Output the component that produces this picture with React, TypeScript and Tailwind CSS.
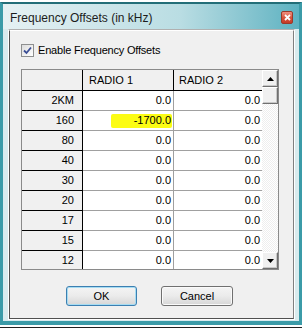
import React from "react";

const rows: { band: string; r1: string; r2: string; mark?: boolean }[] = [
  { band: "2KM", r1: "0.0", r2: "0.0" },
  { band: "160", r1: "-1700.0", r2: "0.0", mark: true },
  { band: "80", r1: "0.0", r2: "0.0" },
  { band: "40", r1: "0.0", r2: "0.0" },
  { band: "30", r1: "0.0", r2: "0.0" },
  { band: "20", r1: "0.0", r2: "0.0" },
  { band: "17", r1: "0.0", r2: "0.0" },
  { band: "15", r1: "0.0", r2: "0.0" },
  { band: "12", r1: "0.0", r2: "0.0" },
];

function ScrollButton({ dir }: { dir?: "up" | "down" }) {
  return (
    <div className="h-[17px] w-[16px] shrink-0 flex items-center justify-center bg-[#f0f0f0] border border-t-white border-l-white border-b-[#707070] border-r-[#707070] shadow-[inset_-1px_-1px_0_#c8c8c8]">
      {dir && (
        <svg width="7" height="4" viewBox="0 0 7 4">
          {dir === "up" ? (
            <polygon points="0,4 7,4 3.5,0" fill="#000" />
          ) : (
            <polygon points="0,0 7,0 3.5,4" fill="#000" />
          )}
        </svg>
      )}
    </div>
  );
}

export default function App() {
  return (
    <div className="w-[302px] h-[330px] bg-white overflow-hidden font-['Liberation_Sans',Arial,sans-serif] text-black">
      <div className="mt-[2px] flex flex-col border-t-2 border-x-[3px] border-b-4 border-[#3b9ba8] border-t-[#236e78] bg-[#d9ebee]">
        {/* title bar */}
        <div className="h-[25px] flex items-center justify-between pl-[7px] pr-[6px] bg-linear-to-r from-[#e6f1f3] via-[#b9dde3] via-60% to-[#5cb2c1]">
          <span className="text-[12px] pt-[3px] text-[#1c1c1c]">Frequency Offsets (in kHz)</span>
          <div className="w-[12px] h-[13px] mt-[1px] rounded-[2px] border border-[#9a3a2a] bg-linear-to-b from-[#f09080] via-[#d8553e] to-[#c43a26] flex items-center justify-center">
            <svg width="7" height="7" viewBox="0 0 7 7">
              <path d="M1 1 L6 6 M6 1 L1 6" stroke="#fff" strokeWidth="1.8" />
            </svg>
          </div>
        </div>

        {/* client area */}
        <div className="ml-[5px] mr-[4px] mb-px border border-t-[#b0b0b0] border-l-white border-b-white border-r-white">
          <div className="h-[289px] bg-[#f0f0f0] border border-t-white border-l-[#505050] border-b-[#505050] border-r-[#808080] flex flex-col pl-[11px]">
            <div className="mt-[13px] flex items-center gap-[4px] h-[13px]">
              <div className="w-[13px] h-[13px] border border-[#8e8f8f] bg-linear-to-br from-[#dcdcdc] to-white flex items-center justify-center">
                <svg width="9" height="9" viewBox="0 0 9 9">
                  <path d="M1 4.5 L3.5 7 L8 1.5" fill="none" stroke="#3b4e95" strokeWidth="1.8" />
                </svg>
              </div>
              <span className="text-[11px] tracking-[-0.2px]">Enable Frequency Offsets</span>
            </div>

            {/* table */}
            <div className="mt-[12px] w-[258px] h-[201px] border border-[#8a8a8a] flex overflow-hidden text-[11px]">
              <div className="w-[240px] flex flex-col shadow-[inset_1px_1px_0_#404040]">
                <div className="h-[21px] shrink-0 flex bg-[#f0f0f0] border-b border-black">
                  <div className="w-[61px] border-r border-black" />
                  <div className="w-[91px] border-r border-black flex items-center pl-[6px]">RADIO 1</div>
                  <div className="w-[88px] flex items-center pl-[5px]">RADIO 2</div>
                </div>
                {rows.map((r) => (
                  <div key={r.band} className="h-[20px] shrink-0 flex">
                    <div className="w-[61px] bg-[#f0f0f0] border-r border-b border-black flex items-center justify-end pr-[8px]">
                      {r.band}
                    </div>
                    <div className="w-[91px] bg-white border-r border-b border-[#a0a0a0] flex items-center justify-end pr-[2px]">
                      {r.mark ? (
                        <span className="h-[14px] pl-[23px] pr-[1px] -mr-[1px] bg-[#fcfc14] rounded-[2px] flex items-center">{r.r1}</span>
                      ) : (
                        r.r1
                      )}
                    </div>
                    <div className="w-[88px] bg-white border-b border-[#a0a0a0] flex items-center justify-end pr-[2px]">
                      {r.r2}
                    </div>
                  </div>
                ))}
              </div>
              <div className="w-[16px] flex flex-col bg-[repeating-conic-gradient(#ffffff_0%_25%,#eeeeee_0%_50%)] bg-[length:2px_2px]">
                <ScrollButton dir="up" />
                <ScrollButton />
                <div className="flex-1" />
                <ScrollButton dir="down" />
              </div>
            </div>

            {/* buttons */}
            <div className="mt-[16px] flex gap-[24px] pl-[45px] text-[11px]">
              <button className="w-[71px] h-[20px] rounded-[3px] border border-[#3c7fb1] bg-linear-to-b from-[#f4f4f4] via-[#ebebeb] via-50% to-[#d6d6d6] shadow-[inset_0_0_0_1px_#a6dcf2]">
                OK
              </button>
              <button className="w-[72px] h-[20px] rounded-[3px] border border-[#707070] bg-linear-to-b from-[#f4f4f4] via-[#ebebeb] via-50% to-[#d6d6d6] shadow-[inset_0_0_0_1px_#fafafa]">
                Cancel
              </button>
            </div>
          </div>
        </div>
      </div>
      <div className="mt-[2px] h-px bg-[#222]" />
    </div>
  );
}
